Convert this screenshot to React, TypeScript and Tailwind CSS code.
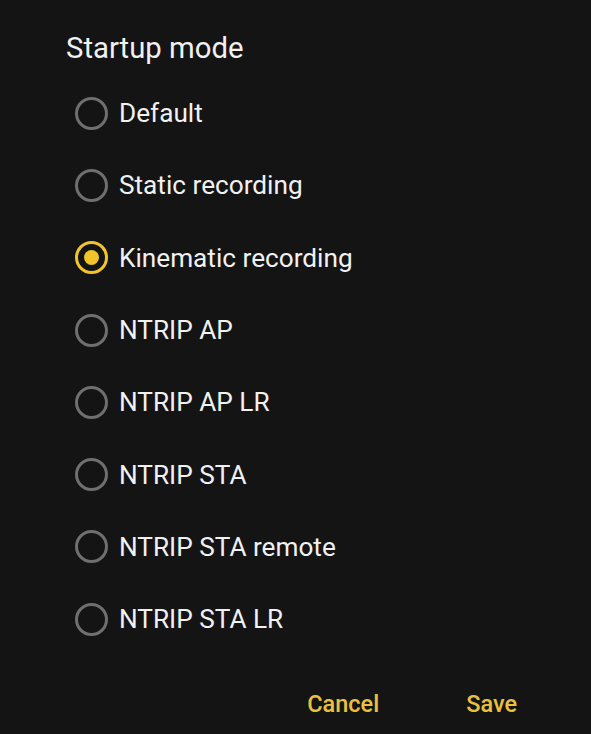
import React, { useState } from 'react';

const modes = [
    "Default",
    "Static recording",
    "Kinematic recording",
    "NTRIP AP",
    "NTRIP AP LR",
    "NTRIP STA",
    "NTRIP STA remote",
    "NTRIP STA LR",
];

export default function App() {
    const [selected, setSelected] = useState("Kinematic recording");

    return (
        <div className="w-[591px] h-[734px] bg-[#141414] text-[#f1f1f1] font-['Roboto',sans-serif] flex flex-col">
            <h1 className="pl-[66px] pt-[29px] text-[29.3px] leading-[38px]">Startup mode</h1>
            <div className="flex flex-col pt-[10px] pl-[75px]">
                {modes.map((m) => {
                    const on = m === selected;
                    return (
                        <button key={m} onClick={() => setSelected(m)} className="h-[72.3px] flex items-center gap-[11px] text-left">
                            <span className={`w-[33px] h-[33px] rounded-full border-[3px] flex items-center justify-center ${on ? "border-[#f0c42a]" : "border-[#6f6f6f]"}`}>
                                {on && <span className="w-[15px] h-[15px] rounded-full bg-[#f0c42a]" />}
                            </span>
                            <span className="text-[26.2px] leading-none">{m}</span>
                        </button>
                    );
                })}
            </div>
            <div className="flex justify-end items-center gap-[87px] pr-[74px] pt-[32px]">
                <button className="text-[23.5px] font-medium text-[#e9c13e]">Cancel</button>
                <button className="text-[23.5px] font-medium text-[#e9c13e]">Save</button>
            </div>
        </div>
    );
}
